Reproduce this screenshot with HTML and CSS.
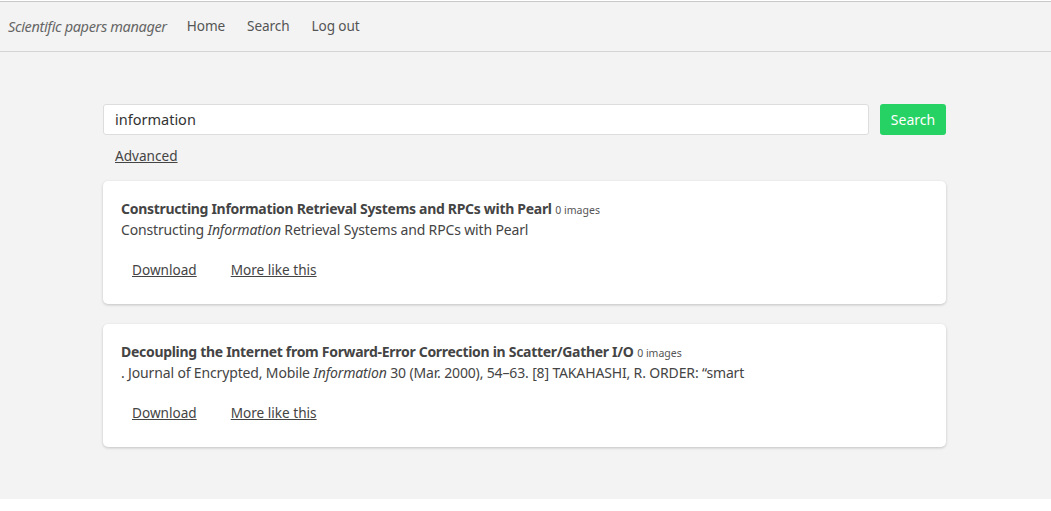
FILE: index.html
```html
<!DOCTYPE html>
<html>
<head>
<meta charset="utf-8">
<link rel="stylesheet" href="styles.css">
</head>
<body>
<div class="page">
  <nav class="navbar">
    <span class="brand">Scientific papers manager</span>
    <a class="nav-link" href="#">Home</a>
    <a class="nav-link" href="#">Search</a>
    <a class="nav-link" href="#">Log out</a>
  </nav>
  <main class="container">
    <form class="search-row">
      <input class="search-input" type="text" value="information">
      <button class="search-btn" type="button">Search</button>
    </form>
    <a class="advanced" href="#">Advanced</a>
    <div class="card">
      <div class="title"><b>Constructing Information Retrieval Systems and RPCs with Pearl</b> <span class="count">0 images</span></div>
      <div class="snippet">Constructing <em>Information</em> Retrieval Systems and RPCs with Pearl</div>
      <div class="actions"><a href="#">Download</a><a href="#">More like this</a></div>
    </div>
    <div class="card">
      <div class="title"><b>Decoupling the Internet from Forward-Error Correction in Scatter/Gather I/O</b> <span class="count">0 images</span></div>
      <div class="snippet">. Journal of Encrypted, Mobile <em>Information</em> 30 (Mar. 2000), 54–63. [8] TAKAHASHI, R. ORDER: “smart</div>
      <div class="actions"><a href="#">Download</a><a href="#">More like this</a></div>
    </div>
  </main>
</div>
</body>
</html>
```
FILE: styles.css
```css
* { box-sizing: border-box; }
html, body { margin: 0; padding: 0; background: #fff; }
body {
  font-family: "Noto Sans", "DejaVu Sans", sans-serif;
  color: #444;
  padding-top: 1px;
}
.page {
  background: #f3f3f3;
  border-top: 1px solid #c8c8c8;
  height: 498px;
}
.navbar {
  height: 50px;
  border-bottom: 1px solid #d4d4d4;
  display: flex;
  align-items: center;
  padding: 0 0 2px 8px;
  font-size: 13.6px;
}
.brand {
  font-size: 14.5px;
  font-style: italic;
  color: #666;
  margin-right: 20px;
  letter-spacing: -0.35px;
}
.nav-link {
  color: #555;
  text-decoration: none;
  margin-right: 22px;
  letter-spacing: -0.1px;
}
.container {
  width: 845px;
  margin: 0 auto;
  padding: 52px 2px 0 0;
}
.search-row {
  display: flex;
  gap: 11px;
  margin: 0;
}
.search-input {
  flex: 1;
  height: 31px;
  border: 1px solid #ddd;
  border-radius: 3px;
  background: #fff;
  font-family: inherit;
  font-size: 14.5px;
  color: #333;
  padding: 0 11px 1px;
  outline: none;
}
.search-btn {
  width: 66px;
  height: 31px;
  border: none;
  border-radius: 3px;
  background: #26d263;
  color: #fff;
  font-family: inherit;
  font-size: 14px;
  padding: 0 0 1px;
}
.advanced {
  display: inline-block;
  margin: 11px 0 0 12px;
  color: #444;
  font-size: 13.6px;
  text-decoration: underline;
}
.card {
  background: #fff;
  border-radius: 5px;
  box-shadow: 0 1px 3px rgba(0,0,0,0.2);
  margin-top: 15px;
  padding: 18px 18px 25px;
  font-size: 14px;
}
.card + .card { margin-top: 20px; }
.title b { color: #444; letter-spacing: -0.3px; }
.count { font-size: 10.5px; color: #555; }
.snippet { margin-top: 2px; color: #444; letter-spacing: -0.15px; }
.actions {
  display: flex;
  gap: 34px;
  padding-left: 11px;
  margin-top: 21px;
}
.actions a { color: #444; text-decoration: underline; font-size: 13.6px; }
```
